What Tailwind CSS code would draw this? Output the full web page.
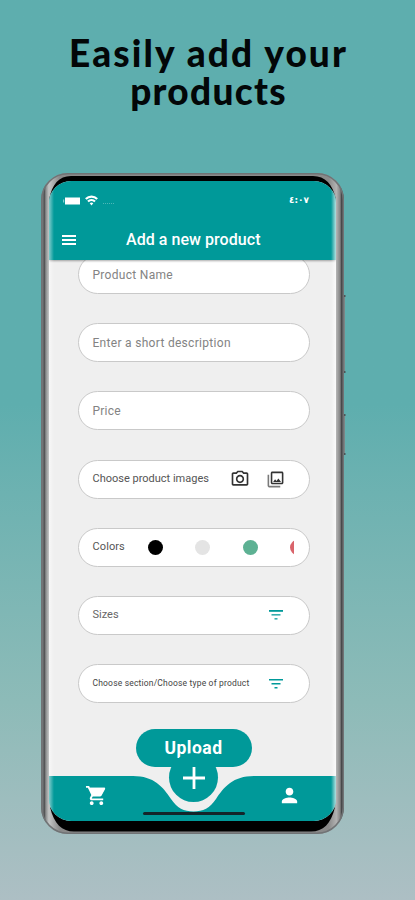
<!DOCTYPE html>
<html lang="en">
<head>
    <meta charset="UTF-8">
    <meta name="viewport" content="width=device-width, initial-scale=1.0">
    <title>Add a new product</title>
    <script src="https://cdn.jsdelivr.net/npm/@tailwindcss/browser@4"></script>
</head>
<body class="font-[Roboto,sans-serif]">
    <main class="w-[415px] h-[900px] overflow-hidden bg-linear-to-b from-[#5eaeae] from-45% via-[#8dbbb8] via-78% to-[#adbfc4]">
      <h1 class="pt-[34px] h-[173px] text-center font-[Lato,sans-serif] font-black text-[37px] leading-[38px] text-[#030708]">
        <span class="block pl-[2px] tracking-[2.1px]">Easily add your</span>
        <span class="block pl-[2px] tracking-[1.3px]">products</span>
      </h1>

      <!-- Phone -->
      <div class="relative isolate ml-[41px] w-[306px] h-[661px] pl-[8px] pt-[8px]">
        <!-- Frame -->
        <svg class="absolute left-0 top-0 -z-10" width="306" height="661" viewBox="0 0 306 661">
          <defs>
            <linearGradient id="frame" x1="0" x2="1" y1="0" y2="0">
              <stop offset="0" stop-color="#777a7b"/>
              <stop offset=".006" stop-color="#77797a"/>
              <stop offset=".011" stop-color="#4e5052"/>
              <stop offset=".016" stop-color="#8a8c8c"/>
              <stop offset=".026" stop-color="#c4c6c6"/>
              <stop offset=".06" stop-color="#8a8a8a"/>
              <stop offset=".95" stop-color="#8a8a8a"/>
              <stop offset=".975" stop-color="#b2b2b2"/>
              <stop offset=".987" stop-color="#858585"/>
              <stop offset=".992" stop-color="#454648"/>
              <stop offset="1" stop-color="#55585a"/>
            </linearGradient>
          </defs>
          <path d="M302 123h2v76h-2zM302 242h2v39h-2z" fill="#7b8586"/>
          <path d="M302 122h2.500v2h-2.500zM302 198h2.500v2h-2.500zM302 241h2.500v2h-2.500zM302 280h2.500v2h-2.500z" fill="#4c5557"/>
          <rect width="303" height="661" rx="27" fill="url(#frame)"/>
          <rect x=".75" y=".75" width="301.500" height="659.500" rx="26" fill="none" stroke="#707375" stroke-width="1.500"/>
          <path d="M8 27C11 11 18 3 30 3H272C284 3 292 11 295 27L270 14H33z" fill="#000"/>
          <path d="M9 634C13 651 21 658.500 33 658.500H270C282 658.500 290 651 294 634L270 646H33z" fill="#000"/>
        </svg>

        <div class="relative flex flex-col w-[287px] h-[640px] rounded-[22px] overflow-hidden bg-[#efefef]">
          <header class="relative z-10 shrink-0 h-[79px] bg-[#009999] text-white shadow-[0_1px_2px_#0005]">
            <div class="flex items-center justify-between h-[39px] pl-[14px] pr-[27px]">
              <div class="flex items-center">
                <svg width="17" height="8" viewBox="0 0 17 8" fill="#fff"><path d="M2 .5h15v7H2z"/><path d="M0 2.500h1.200v3H0z" opacity=".5"/></svg>
                <svg class="ml-[5px]" width="13" height="11" viewBox="0 0 13 11" fill="none" stroke="#fff" stroke-width="2.200"><path d="M.8 4a8.200 8.200 0 0 1 11.400 0M3 6.500a5 5 0 0 1 7 0"/><path d="M6.500 10.500 4.700 8.300a2.600 2.600 0 0 1 3.600 0z" fill="#fff" stroke="none"/></svg>
                <span class="ml-[5px] mt-[6px] w-[11px] border-t border-dotted border-white/30"></span>
              </div>
              <span class="text-[9px] leading-none font-bold font-['DejaVu_Sans',sans-serif]" dir="ltr">٤:٠٧</span>
            </div>
            <div class="flex items-center h-[40px] pl-[13px]">
              <svg width="14" height="10" viewBox="0 0 14 10" fill="#fff"><path d="M0 0h14v2H0zM0 4h14v2H0zM0 8h14v2H0z"/></svg>
              <span class="ml-[50px] text-[16px] font-medium tracking-[0.05px]">Add a new product</span>
            </div>
          </header>

          <!-- Form fields -->
          <form class="flex flex-col items-center gap-[29.2px] -mt-[5px] pl-[2px] text-[12px] text-[#838383]">
            <div class="flex items-center w-[232px] h-[39px] pl-[14px] rounded-full bg-white border border-[#c9c9c9]"><span class="tracking-[0.3px]">Product Name</span></div>
            <div class="flex items-center w-[232px] h-[39px] pl-[14px] rounded-full bg-white border border-[#c9c9c9]"><span class="tracking-[0.3px]">Enter a short description</span></div>
            <div class="flex items-center w-[232px] h-[39px] pl-[14px] rounded-full bg-white border border-[#c9c9c9]"><span class="tracking-[0.2px]">Price</span></div>
            <div class="flex items-center w-[232px] h-[39px] pl-[14px] rounded-full bg-white border border-[#c9c9c9] text-[#555]">
              <span class="w-[137px] text-[11px] whitespace-nowrap">Choose product images</span>
              <svg width="20" height="20" viewBox="0 0 24 24" fill="#333"><path d="M14.120 4l1.830 2H20v12H4V6h4.050l1.830-2h4.240M15 2H9L7.170 4H4c-1.100 0-2 .9-2 2v12c0 1.100.9 2 2 2h16c1.100 0 2-.9 2-2V6c0-1.100-.9-2-2-2h-3.170L15 2zm-3 7c1.650 0 3 1.350 3 3s-1.350 3-3 3-3-1.350-3-3 1.350-3 3-3m0-2c-2.760 0-5 2.240-5 5s2.240 5 5 5 5-2.240 5-5-2.240-5-5-5z"/></svg>
              <svg class="ml-[16px]" width="19" height="19" viewBox="0 0 24 24" fill="#333"><path d="M20 4v12H8V4h12m0-2H8c-1.100 0-2 .9-2 2v12c0 1.100.9 2 2 2h12c1.100 0 2-.9 2-2V4c0-1.100-.9-2-2-2zm-8.500 9.670l1.690 2.260 2.480-3.100L19 15H9z"/><path d="M2 6v14c0 1.100.9 2 2 2h14v-2H4V6H2z" opacity=".65"/></svg>
            </div>
            <div class="flex items-center w-[232px] h-[39px] pl-[14px] rounded-full bg-white border border-[#c9c9c9] text-[#555]">
              <span class="w-[55px] text-[11px] tracking-[0.1px]">Colors</span>
              <div class="flex gap-[32.500px] w-[146px] overflow-hidden">
                <i class="shrink-0 size-[15px] rounded-full bg-black"></i>
                <i class="shrink-0 size-[15px] rounded-full bg-[#e4e4e4]"></i>
                <i class="shrink-0 size-[15px] rounded-full bg-[#5db193]"></i>
                <i class="shrink-0 size-[15px] rounded-full bg-[#d9646b]"></i>
              </div>
            </div>
            <div class="flex items-center justify-between w-[232px] h-[39px] pl-[14px] pr-[26px] rounded-full bg-white border border-[#c9c9c9] text-[#666]">
              <span class="text-[11px]">Sizes</span>
              <svg width="14" height="10" viewBox="0 0 14 10"><path d="M0 0h14v1.800H0z" fill="#009999"/><path d="M2.500 4h9v1.600h-9z" fill="#38aeae"/><path d="M5.500 8h3v1.600h-3z" fill="#38aeae"/></svg>
            </div>
            <div class="flex items-center justify-between w-[232px] h-[39px] pl-[14px] pr-[26px] rounded-full bg-white border border-[#c9c9c9] text-[#444]">
              <span class="text-[8.5px] tracking-[0.18px] whitespace-nowrap">Choose section/Choose type of product</span>
              <svg width="14" height="10" viewBox="0 0 14 10" fill="#009999"><path d="M0 0h14v1.600H0zM2.500 4h9v1.600h-9zM5.500 8h3v1.600h-3z"/></svg>
            </div>
            <button type="button" class="-mt-[3px] w-[116px] h-[38px] rounded-full bg-[#009999] text-white text-[17.5px] font-bold tracking-[0.5px]">Upload</button>
          </form>

          <!-- Bottom navigation, notched round the add button -->
          <nav class="absolute left-0 bottom-0 w-[287px] h-[45px]">
            <svg class="absolute inset-0" width="287" height="45" viewBox="0 0 287 45"><path d="M0 0H84C105 0 114 11 122 23C128 32 135 35.500 144.500 35.500C154 35.500 161 32 167 23C175 11 184 0 205 0H287V45H0z" fill="#009999"/></svg>
            <div class="relative flex justify-between pl-[36px] pr-[35px] pt-[8px]">
              <svg width="23" height="23" viewBox="0 0 24 24" fill="#fff"><path d="M7 18c-1.100 0-1.990.9-1.990 2S5.900 22 7 22s2-.9 2-2-.9-2-2-2zM1 2v2h2l3.600 7.590-1.350 2.450c-.16.280-.25.610-.25.960 0 1.100.9 2 2 2h12v-2H7.420c-.14 0-.25-.11-.25-.25l.03-.12.900-1.630h7.450c.75 0 1.410-.41 1.750-1.030l3.580-6.490A1 1 0 0 0 20 4H5.210l-.94-2H1zm16 16c-1.100 0-1.990.9-1.990 2s.89 2 1.990 2 2-.9 2-2-.9-2-2-2z"/><path d="M5 4h16l-4.500 8.500H8z"/></svg>
              <svg width="23" height="23" viewBox="0 0 24 24" fill="#fff"><path d="M12 12c2.210 0 4-1.790 4-4s-1.790-4-4-4-4 1.790-4 4 1.790 4 4 4zm0 2c-2.670 0-8 1.340-8 4v2h16v-2c0-2.660-5.330-4-8-4z"/></svg>
            </div>
            <div class="absolute left-[120px] -top-[23px] flex items-center justify-center size-[49px] rounded-full bg-[#009999]">
              <svg width="22" height="22" viewBox="0 0 22 22" stroke="#fff" stroke-width="2.800"><path d="M11 0v22M0 11h22"/></svg>
            </div>
            <div class="absolute left-[94px] bottom-[6px] w-[102px] h-[3px] rounded-full bg-[#14252a]"></div>
          </nav>

          <!-- Light on the curved screen edges -->
          <div class="absolute z-20 left-0 top-0 w-[5px] h-full bg-linear-to-r from-white/50 to-transparent"></div>
          <div class="absolute z-20 right-0 top-0 w-[5px] h-full bg-linear-to-l from-white/70 to-transparent"></div>
        </div>
      </div>
    </main>
</body>
</html>
